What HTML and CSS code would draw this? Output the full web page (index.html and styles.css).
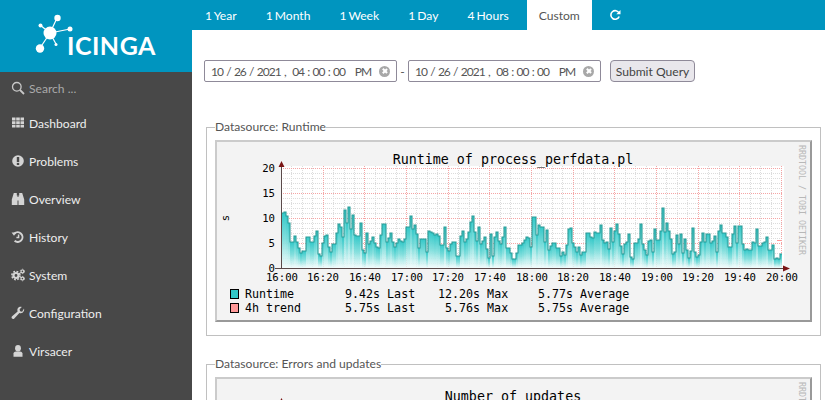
FILE: index.html
```html
<!DOCTYPE html>
<html lang="en">
<head>
    <meta charset="UTF-8">
    <title>Icinga - Graphs</title>
    <link rel="stylesheet" href="styles.css">
</head>
<body>

<div class="layout">

    <!-- Sidebar -->
    <aside class="sidebar">
        <div class="logo">
            <svg class="logo-mark" width="80" height="60" viewBox="0 0 80 60">
                <g stroke="#fff" stroke-width="1.2">
                    <line x1="50" y1="33" x2="57" y2="18"/>
                    <line x1="50" y1="33" x2="40" y2="25"/>
                    <line x1="50" y1="33" x2="70" y2="29"/>
                    <line x1="50" y1="33" x2="40" y2="48"/>
                    <line x1="50" y1="33" x2="56" y2="44"/>
                </g>
                <g fill="#fff">
                    <circle cx="50" cy="33" r="6.5"/>
                    <circle cx="57.5" cy="18" r="3.2"/>
                    <circle cx="40.5" cy="25.5" r="2"/>
                    <circle cx="70" cy="29" r="2.5"/>
                    <circle cx="40" cy="48.5" r="4.2"/>
                    <circle cx="56" cy="44.5" r="1.5"/>
                </g>
            </svg>
            <span class="logo-text">ICINGA</span>
        </div>

        <div class="search">
            <svg class="icon" viewBox="0 0 14 14">
                <circle cx="5.8" cy="5.8" r="4.3" fill="none" stroke="#c8c8c8" stroke-width="1.3"/>
                <line x1="9" y1="9" x2="13" y2="13" stroke="#c8c8c8" stroke-width="1.8"/>
            </svg>
            <span>Search ...</span>
        </div>

        <nav class="nav">
            <a class="nav-item">
                <svg class="icon" viewBox="0 0 14 14">
                    <path fill="#d4d4d4" d="M1 1.500h3.500v3H1zM5.200 1.500h3.600v3H5.200zM9.500 1.500H13v3H9.500zM1 5.200h3.500v2.800H1zM5.200 5.200h3.600v2.800H5.200zM9.500 5.200H13v2.800H9.500zM1 8.700h3.500v2.800H1zM5.200 8.700h3.600v2.800H5.200zM9.500 8.700H13v2.800H9.500z"/>
                </svg>
                Dashboard
            </a>
            <a class="nav-item">
                <svg class="icon" viewBox="0 0 14 14">
                    <circle cx="7" cy="7" r="5.8" fill="#d4d4d4"/>
                    <rect x="5.800" y="3" width="2.400" height="5" fill="#484848"/>
                    <rect x="5.800" y="8.900" width="2.400" height="2.100" fill="#484848"/>
                </svg>
                Problems
            </a>
            <a class="nav-item">
                <svg class="icon" viewBox="0 0 14 14">
                    <path fill="#d4d4d4" d="M2.800 1h3v2.500h.7v9.500H.8V7.500zM11.200 1h-3v2.500h-.7v9.500h5.700V7.500z"/>
                    <rect x="6" y="5" width="2" height="3.500" fill="#d4d4d4"/>
                </svg>
                Overview
            </a>
            <a class="nav-item">
                <svg class="icon" viewBox="0 0 14 14">
                    <path fill="none" stroke="#d4d4d4" stroke-width="2" d="M3.400 3.600A4.800 4.800 0 1 1 3.600 10.800"/>
                    <path fill="#d4d4d4" d="M.6 2.400h5L3 5.800z"/>
                    <path fill="none" stroke="#d4d4d4" stroke-width="1.500" d="M7.600 4.400v3.100H5.400"/>
                </svg>
                History
            </a>
            <a class="nav-item">
                <svg class="icon" viewBox="0 0 14 14">
                    <g fill="none" stroke="#d4d4d4">
                        <circle cx="5" cy="7.500" r="2.500" stroke-width="2.200"/>
                        <circle cx="5" cy="7.500" r="4.100" stroke-width="1.600" stroke-dasharray="1.800 1.420"/>
                        <circle cx="11.400" cy="3.400" r="1.400" stroke-width="1.200"/>
                        <circle cx="11.400" cy="3.400" r="2.200" stroke-width="1" stroke-dasharray="1 1.300"/>
                        <circle cx="11.400" cy="10.600" r="1.400" stroke-width="1.200"/>
                        <circle cx="11.400" cy="10.600" r="2.200" stroke-width="1" stroke-dasharray="1 1.300"/>
                    </g>
                </svg>
                System
            </a>
            <a class="nav-item">
                <svg class="icon" viewBox="0 0 14 14">
                    <path fill="#d4d4d4" d="M13 2.600c.5 1.600-.1 3.300-1.500 4.100-1 .6-2.100.6-3.100.2L3.300 12.500c-.6.700-1.700.7-2.300.1s-.6-1.700.1-2.300L6.600 5.400C6.200 4.300 6.300 3.100 7 2.100 7.900.9 9.400.5 10.800 1L8.600 3.200l.5 2 2 .6z"/>
                </svg>
                Configuration
            </a>
            <a class="nav-item">
                <svg class="icon" viewBox="0 0 14 14">
                    <ellipse cx="7" cy="4.200" rx="2.900" ry="3.300" fill="#d4d4d4"/>
                    <path fill="#d4d4d4" d="M2.500 12.800V9.600c0-1 .8-1.700 2.500-2.100h4c1.700.4 2.500 1.100 2.500 2.100v3.200z"/>
                </svg>
                Virsacer
            </a>
        </nav>
    </aside>

    <!-- Main content -->
    <main class="content">
        <div class="tabs">
            <a class="tab">1 Year</a>
            <a class="tab">1 Month</a>
            <a class="tab">1 Week</a>
            <a class="tab">1 Day</a>
            <a class="tab">4 Hours</a>
            <a class="tab active">Custom</a>
            <a class="tab">
                <svg class="reload" viewBox="0 0 12 12" width="12" height="12">
                    <path fill="none" stroke="#fff" stroke-width="1.600" d="M10 4A4.300 4.300 0 1 0 10.200 7.500"/>
                    <path fill="#fff" d="M11.500 1v4.300H7.300z"/>
                </svg>
            </a>
        </div>

        <form class="range-form">
            <div class="date-field">
                <span class="date-text">10 / 26 / 2021 ,  04 : 00 : 00   PM</span>
                <span class="clear"></span>
            </div>
            <span class="dash">-</span>
            <div class="date-field">
                <span class="date-text">10 / 26 / 2021 ,  08 : 00 : 00   PM</span>
                <span class="clear"></span>
            </div>
            <button type="button" class="submit">Submit Query</button>
        </form>

        <fieldset class="datasource">
            <legend>Datasource: Runtime</legend>
            <div class="graph">
                <svg class="graph-svg" width="593" height="178" viewBox="0 0 593 178">
                    <rect x="64" y="24" width="503" height="102" fill="#fff"/>
                    <g id="grid"></g>
                    <g id="bars"></g>
                    <line x1="560" y1="98.500" x2="564" y2="98.500" stroke="#ff9999"/>
                    <line x1="64.500" y1="22" x2="64.500" y2="126" stroke="#5a4a4a"/>
                    <line x1="58" y1="126.500" x2="568" y2="126.500" stroke="#5a4a4a"/>
                    <path fill="#7a1414" d="M61.500 25l3-6 3 6zM566 123.500l7 3-7 3z"/>

                    <text class="title" x="296" y="22" text-anchor="middle">Runtime of process_perfdata.pl</text>
                    <text class="credit" transform="translate(582 3) rotate(90)">RRDTOOL / TOBI OETIKER</text>
                    <text class="axis" transform="translate(12 76) rotate(-90)" text-anchor="middle">s</text>

                    <g class="axis" text-anchor="end">
                        <text x="58" y="30">20</text>
                        <text x="58" y="55">15</text>
                        <text x="58" y="80">10</text>
                        <text x="58" y="105">5</text>
                        <text x="58" y="130">0</text>
                    </g>
                    <g class="axis" text-anchor="middle">
                        <text x="65" y="139">16:00</text>
                        <text x="106" y="139">16:20</text>
                        <text x="148" y="139">16:40</text>
                        <text x="190" y="139">17:00</text>
                        <text x="231" y="139">17:20</text>
                        <text x="273" y="139">17:40</text>
                        <text x="315" y="139">18:00</text>
                        <text x="356" y="139">18:20</text>
                        <text x="398" y="139">18:40</text>
                        <text x="440" y="139">19:00</text>
                        <text x="481" y="139">19:20</text>
                        <text x="523" y="139">19:40</text>
                        <text x="565" y="139">20:00</text>
                    </g>

                    <rect x="13.500" y="147.500" width="8" height="9" fill="#33c8c8" stroke="#000"/>
                    <rect x="13.500" y="161.500" width="8" height="9" fill="#ff9999" stroke="#000"/>
                    <text class="legend" y="156">
                        <tspan x="28">Runtime</tspan>
                        <tspan x="128">9.42s Last</tspan>
                        <tspan x="221">12.20s Max</tspan>
                        <tspan x="321">5.77s Average</tspan>
                    </text>
                    <text class="legend" y="170">
                        <tspan x="28">4h trend</tspan>
                        <tspan x="128">5.75s Last</tspan>
                        <tspan x="228">5.76s Max</tspan>
                        <tspan x="321">5.75s Average</tspan>
                    </text>
                </svg>
            </div>
        </fieldset>

        <fieldset class="datasource">
            <legend>Datasource: Errors and updates</legend>
            <div class="graph">
                <svg class="graph-svg" width="593" height="178" viewBox="0 0 593 178">
                    <path fill="#7a1414" d="M61.500 25l3-6 3 6z"/>
                    <text class="title" x="296" y="22" text-anchor="middle">Number of updates</text>
                    <text class="credit" transform="translate(582 3) rotate(90)">RRDTOOL / TOBI OETIKER</text>
                </svg>
            </div>
        </fieldset>
    </main>

</div>

<script src="chart.js"></script>
</body>
</html>
```

FILE: styles.css
```css
html, body {
    margin: 0;
    padding: 0;
    height: 100%;
    overflow: hidden;
}

body {
    font-family: Lato, "Open Sans", sans-serif;
    font-size: 12.100px;
    color: #555;
    background-color: #fff;
}

.layout {
    display: grid;
    grid-template-columns: 192px 1fr;
    height: 400px;
}

/* Sidebar */
.sidebar {
    background-color: #484848;
    color: #eee;
}

.logo {
    position: relative;
    height: 72px;
    background-color: #0095bf;
}

.logo-mark {
    display: block;
}

.logo-text {
    position: absolute;
    left: 67px;
    top: 29px;
    font-size: 25px;
    font-weight: 700;
    line-height: 32px;
    letter-spacing: 0.500px;
    color: #fff;
}

.search {
    display: flex;
    align-items: center;
    gap: 4px;
    height: 32px;
    padding-left: 11px;
    color: #aaa;
}

.icon {
    width: 14px;
    height: 14px;
    flex: none;
}

.nav-item {
    display: flex;
    align-items: center;
    gap: 4px;
    height: 38px;
    padding-left: 11px;
    color: #eee;
}

/* Tabs */
.tabs {
    display: flex;
    gap: 5px;
    height: 30px;
    padding-left: 1px;
    background-color: #0095bf;
}

.tab {
    display: flex;
    align-items: center;
    padding: 0 12px;
    color: #fff;
    word-spacing: -1px;
}

.tab.active {
    margin-left: 1px;
    background-color: #fff;
    color: #555;
}

.reload {
    display: block;
}

/* Date range form */
.range-form {
    display: flex;
    align-items: center;
    margin: 30px 0 0 12px;
}

.date-field {
    display: flex;
    align-items: center;
    justify-content: space-between;
    width: 193px;
    height: 22px;
    padding: 0 6px;
    border: 1px solid #8f8a99;
    border-radius: 2px;
    box-sizing: border-box;
}

.date-text {
    font-size: 12px;
    letter-spacing: -1px;
    word-spacing: 1.200px;
    white-space: pre;
}

.clear {
    position: relative;
    flex: none;
    width: 11px;
    height: 11px;
    border-radius: 50%;
    background-color: #a8a8a8;
}

.clear::before,
.clear::after {
    content: "";
    position: absolute;
    left: 4.750px;
    top: 2.500px;
    width: 1.500px;
    height: 6px;
    background-color: #fff;
    transform: rotate(45deg);
}

.clear::after {
    transform: rotate(-45deg);
}

.dash {
    width: 11px;
    text-align: center;
}

.submit {
    height: 22px;
    width: 85px;
    margin-left: 9px;
    padding: 0;
    border: 1px solid #8f8a99;
    border-radius: 4px;
    background-color: #e9e7ec;
    color: #444;
    font-family: inherit;
    font-size: 12.100px;
}

/* Graph boxes */
.datasource {
    margin: 37px 5px 0 14px;
    padding: 5px 8px 13px 8px;
    border: 1px solid #c0c0c0;
    min-width: 0;
}

.datasource + .datasource {
    margin-top: 20px;
}

.datasource legend {
    padding: 0;
    font-size: 12.100px;
    line-height: 16px;
}

.graph {
    width: 593px;
    height: 178px;
    border: 2px solid;
    border-color: #cbcbcb #999 #999 #cbcbcb;
    background-color: #f3f3f3;
}

.graph-svg {
    display: block;
    font-family: "DejaVu Sans Mono", monospace;
    fill: #000;
}

.title {
    font-size: 13.330px;
}

.axis {
    font-size: 10.670px;
}

.legend {
    font-size: 11.670px;
}

.credit {
    font-size: 8.300px;
    fill: #b8b8b8;
}
```

FILE: chart.js
```javascript
// top edge of every 2px column, measured in page pixels
const tops = [
    213,212,216,223,242,242,236,242,248,253,251,251,237,237,242,242,236,231,254,256,
    243,236,235,247,252,244,244,233,224,227,237,210,223,207,229,215,235,236,236,223,
    250,253,233,244,241,237,243,247,248,235,224,224,242,238,233,242,247,243,239,241,
    242,239,227,227,216,229,225,234,248,239,239,239,252,231,232,233,235,234,236,245,
    245,227,248,251,244,242,242,
    256,256,236,231,242,239,232,222,216,232,241,227,244,241,237,249,258,234,256,237,
    232,241,244,237,227,248,248,253,259,259,253,245,245,243,240,237,238,247,217,217,
    235,225,227,227,242,230,250,246,243,243,248,248,256,252,255,245,229,228,243,247,
    252,247,255,252,252,233,233,237,238,232,233,233,225,240,243,242,249,228,242,231,
    224,234,246,254,244,242,234,
    257,259,243,243,239,224,244,250,255,241,240,252,229,240,240,231,208,232,223,231,
    239,254,252,235,244,234,253,239,250,258,251,228,252,257,255,242,233,242,234,234,
    243,241,236,252,231,225,233,233,237,247,247,234,226,243,226,226,244,250,249,250,
    250,242,243,229,246,246,243,242,237,250,250,245,259,258,259,254
];

const NS = 'http://www.w3.org/2000/svg';
const PLOT_X = 64;
const PLOT_W = 500;
const PLOT_TOP = 24;
const BASE_Y = 126;
const PAGE_Y = 142; // page y of the svg top

function el(name, attrs) {
    const node = document.createElementNS(NS, name);
    for (const key in attrs) {
        node.setAttribute(key, attrs[key]);
    }
    return node;
}

// dotted lines, one pixel on and one off
function rowDots(y) {
    let d = '';
    for (let x = PLOT_X; x < PLOT_X + PLOT_W + 2; x += 2) {
        d += 'M' + x + ' ' + (y + 0.5) + 'h1';
    }
    return d;
}

function columnDots(x, bottom) {
    let d = '';
    for (let y = PLOT_TOP; y < bottom; y += 2) {
        d += 'M' + (x + 0.5) + ' ' + y + 'v1';
    }
    return d;
}

// Grid
let minor = '';
let major = '';
for (let i = 0; i <= 20; i++) {
    const y = BASE_Y - i * 5;
    if (i % 5 === 0) {
        major += rowDots(y);
    } else {
        minor += rowDots(y);
    }
}
for (let i = 0; i <= 48; i++) {
    const x = Math.round(PLOT_X + i * PLOT_W / 48);
    if (i % 4 === 0) {
        major += columnDots(x, BASE_Y + 2);
    } else {
        minor += columnDots(x, BASE_Y);
    }
}
const grid = document.getElementById('grid');
grid.appendChild(el('path', { d: minor, fill: 'none', stroke: '#dcdcdc' }));
grid.appendChild(el('path', { d: major, fill: 'none', stroke: '#f5a5a5' }));

// Columns with their own fade, then the outline on top
const bars = document.getElementById('bars');
const defs = el('defs', {});
const fade = el('linearGradient', { id: 'fade', x1: 0, y1: 0, x2: 0, y2: 1 });
fade.appendChild(el('stop', { offset: 0, 'stop-color': '#33c8c8' }));
fade.appendChild(el('stop', { offset: 0.5, 'stop-color': '#7fdedc', 'stop-opacity': 0.95 }));
fade.appendChild(el('stop', { offset: 1, 'stop-color': '#f0fbfb', 'stop-opacity': 0.8 }));
defs.appendChild(fade);
bars.appendChild(defs);

let outline = '';
tops.forEach((top, i) => {
    const x = PLOT_X + i * 2 + 1;
    const y = top - PAGE_Y;
    bars.appendChild(el('rect', {
        x, y, width: 2, height: BASE_Y - y,
        fill: 'url(#fade)',
        'shape-rendering': 'crispEdges'
    }));
    outline += (i === 0 ? 'M' : 'L') + x + ' ' + y + 'L' + (x + 2) + ' ' + y;
});
bars.appendChild(el('path', {
    d: outline,
    fill: 'none',
    stroke: '#2a9c98',
    'stroke-width': 1.1
}));
```
